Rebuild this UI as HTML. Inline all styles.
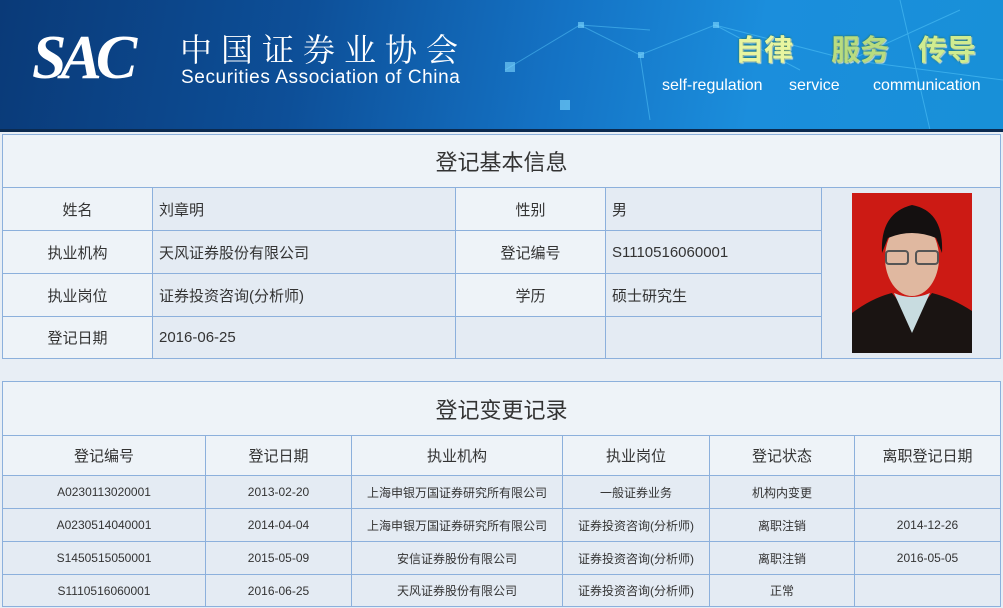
<!DOCTYPE html>
<html><head><meta charset="utf-8"><style>
*{margin:0;padding:0;box-sizing:border-box}
body{width:1003px;height:608px;background:#e8eef5;font-family:"Liberation Sans","Noto Sans CJK SC",sans-serif;position:relative;overflow:hidden;color:#333}
#hdr{position:absolute;left:0;top:0;width:1003px;height:132px;background:linear-gradient(100deg,#0a3a78 0%,#0d4f98 30%,#1472c4 55%,#1b8edc 75%,#1890d8 100%);overflow:hidden}
#hdr .bar{position:absolute;left:0;top:129px;width:1003px;height:3px;background:#0b2a50}
.c{position:absolute;border:1px solid #8cb0dc;display:flex;align-items:center;font-size:15px}
.l{background:#eef3f8;justify-content:center}
.v{background:#e4ebf3;padding-left:6px}
.t{background:#eef3f8;justify-content:center;font-size:22px;color:#333}
.h{background:#eef3f8;justify-content:center;font-size:15px}
.d{background:#e4ebf3;justify-content:center;font-size:12px}
</style></head><body>
<div id="hdr">
<svg width="1003" height="132" style="position:absolute;left:0;top:0">
<g stroke="#5fd0ff" stroke-opacity=".45" stroke-width="1" fill="none">
<path d="M505 70 L580 25 L640 55 L715 25 L850 60 L960 10 M640 55 L650 120 M580 25 L650 30 M715 25 L800 70 M850 60 L1003 80 M900 0 L930 130"/>
</g>
<g fill="#7fd8ff" fill-opacity=".6"><rect x="578" y="22" width="6" height="6"/><rect x="638" y="52" width="6" height="6"/><rect x="713" y="22" width="6" height="6"/><rect x="848" y="57" width="6" height="6"/><rect x="505" y="62" width="10" height="10"/><rect x="560" y="100" width="10" height="10"/></g>
</svg>
<div style="position:absolute;left:32px;top:27px;font-family:'Liberation Serif',serif;font-style:italic;font-weight:bold;font-size:62px;color:#fff;letter-spacing:-6px;line-height:62px">SAC</div>
<div style="position:absolute;left:180px;top:30px;font-family:'Noto Serif CJK SC',serif;font-size:32px;color:#fff;letter-spacing:9px;line-height:36px">中国证券业协会</div>
<div style="position:absolute;left:181px;top:67px;font-size:19px;color:#fff;line-height:22px;letter-spacing:0.6px">Securities Association of China</div>
<div style="position:absolute;left:735px;top:34px;font-size:29px;font-weight:bold;color:#e8f5a0;line-height:34px;text-shadow:0 0 2px #2a6a2a,1px 1px 1px #fff">自律</div>
<div style="position:absolute;left:831px;top:34px;font-size:29px;font-weight:bold;color:#b8dc80;line-height:34px;text-shadow:0 0 2px #2a6a2a,1px 1px 1px #fff">服务</div>
<div style="position:absolute;left:918px;top:34px;font-size:29px;font-weight:bold;color:#d0ec90;line-height:34px;text-shadow:0 0 2px #2a6a2a,1px 1px 1px #fff">传导</div>
<div style="position:absolute;left:662px;top:76px;font-size:16px;color:#fff;line-height:20px">self-regulation</div>
<div style="position:absolute;left:789px;top:76px;font-size:16px;color:#fff;line-height:20px">service</div>
<div style="position:absolute;left:873px;top:76px;font-size:16px;color:#fff;line-height:20px">communication</div>
<div class="bar"></div>
</div>

<div class="c t" style="left:2px;top:134px;width:999px;height:54px">登记基本信息</div>
<div class="c l" style="left:2px;top:187px;width:151px;height:44px">姓名</div>
<div class="c v" style="left:152px;top:187px;width:304px;height:44px">刘章明</div>
<div class="c l" style="left:455px;top:187px;width:151px;height:44px">性别</div>
<div class="c v" style="left:605px;top:187px;width:217px;height:44px">男</div>
<div class="c l" style="left:2px;top:230px;width:151px;height:44px">执业机构</div>
<div class="c v" style="left:152px;top:230px;width:304px;height:44px">天风证券股份有限公司</div>
<div class="c l" style="left:455px;top:230px;width:151px;height:44px">登记编号</div>
<div class="c v" style="left:605px;top:230px;width:217px;height:44px">S1110516060001</div>
<div class="c l" style="left:2px;top:273px;width:151px;height:44px">执业岗位</div>
<div class="c v" style="left:152px;top:273px;width:304px;height:44px">证券投资咨询(分析师)</div>
<div class="c l" style="left:455px;top:273px;width:151px;height:44px">学历</div>
<div class="c v" style="left:605px;top:273px;width:217px;height:44px">硕士研究生</div>
<div class="c l" style="left:2px;top:316px;width:151px;height:43px">登记日期</div>
<div class="c v" style="left:152px;top:316px;width:304px;height:43px">2016-06-25</div>
<div class="c v" style="left:455px;top:316px;width:151px;height:43px"></div>
<div class="c v" style="left:605px;top:316px;width:217px;height:43px"></div>
<div class="c v" style="left:821px;top:187px;width:180px;height:172px"></div>
<svg style="position:absolute;left:852px;top:193px" width="120" height="160" viewBox="0 0 120 160">
<rect width="120" height="160" fill="#cc1a14"/>
<path d="M0 120 Q20 105 40 100 L60 125 L80 100 Q100 105 120 118 L120 160 L0 160Z" fill="#1a1412"/>
<path d="M42 100 L60 140 L78 100 Q60 108 42 100Z" fill="#c8dce0"/>
<ellipse cx="60" cy="65" rx="27" ry="38" fill="#e0b8a0"/>
<path d="M30 60 Q28 20 60 12 Q92 18 90 60 L84 45 Q60 35 36 45Z" fill="#141010"/>
<rect x="34" y="58" width="22" height="13" rx="3" fill="none" stroke="#555" stroke-width="2"/>
<rect x="64" y="58" width="22" height="13" rx="3" fill="none" stroke="#555" stroke-width="2"/>
</svg>

<div class="c t" style="left:2px;top:381px;width:999px;height:55px">登记变更记录</div>
<div class="c h" style="left:2px;top:435px;width:204px;height:41px">登记编号</div>
<div class="c h" style="left:205px;top:435px;width:147px;height:41px">登记日期</div>
<div class="c h" style="left:351px;top:435px;width:212px;height:41px">执业机构</div>
<div class="c h" style="left:562px;top:435px;width:148px;height:41px">执业岗位</div>
<div class="c h" style="left:709px;top:435px;width:146px;height:41px">登记状态</div>
<div class="c h" style="left:854px;top:435px;width:147px;height:41px">离职登记日期</div>

<div class="c d" style="left:2px;top:475px;width:204px;height:34px">A0230113020001</div>
<div class="c d" style="left:205px;top:475px;width:147px;height:34px">2013-02-20</div>
<div class="c d" style="left:351px;top:475px;width:212px;height:34px">上海申银万国证券研究所有限公司</div>
<div class="c d" style="left:562px;top:475px;width:148px;height:34px">一般证券业务</div>
<div class="c d" style="left:709px;top:475px;width:146px;height:34px">机构内变更</div>
<div class="c d" style="left:854px;top:475px;width:147px;height:34px"></div>

<div class="c d" style="left:2px;top:508px;width:204px;height:34px">A0230514040001</div>
<div class="c d" style="left:205px;top:508px;width:147px;height:34px">2014-04-04</div>
<div class="c d" style="left:351px;top:508px;width:212px;height:34px">上海申银万国证券研究所有限公司</div>
<div class="c d" style="left:562px;top:508px;width:148px;height:34px">证券投资咨询(分析师)</div>
<div class="c d" style="left:709px;top:508px;width:146px;height:34px">离职注销</div>
<div class="c d" style="left:854px;top:508px;width:147px;height:34px">2014-12-26</div>

<div class="c d" style="left:2px;top:541px;width:204px;height:34px">S1450515050001</div>
<div class="c d" style="left:205px;top:541px;width:147px;height:34px">2015-05-09</div>
<div class="c d" style="left:351px;top:541px;width:212px;height:34px">安信证券股份有限公司</div>
<div class="c d" style="left:562px;top:541px;width:148px;height:34px">证券投资咨询(分析师)</div>
<div class="c d" style="left:709px;top:541px;width:146px;height:34px">离职注销</div>
<div class="c d" style="left:854px;top:541px;width:147px;height:34px">2016-05-05</div>

<div class="c d" style="left:2px;top:574px;width:204px;height:33px">S1110516060001</div>
<div class="c d" style="left:205px;top:574px;width:147px;height:33px">2016-06-25</div>
<div class="c d" style="left:351px;top:574px;width:212px;height:33px">天风证券股份有限公司</div>
<div class="c d" style="left:562px;top:574px;width:148px;height:33px">证券投资咨询(分析师)</div>
<div class="c d" style="left:709px;top:574px;width:146px;height:33px">正常</div>
<div class="c d" style="left:854px;top:574px;width:147px;height:33px"></div>
</body></html>
